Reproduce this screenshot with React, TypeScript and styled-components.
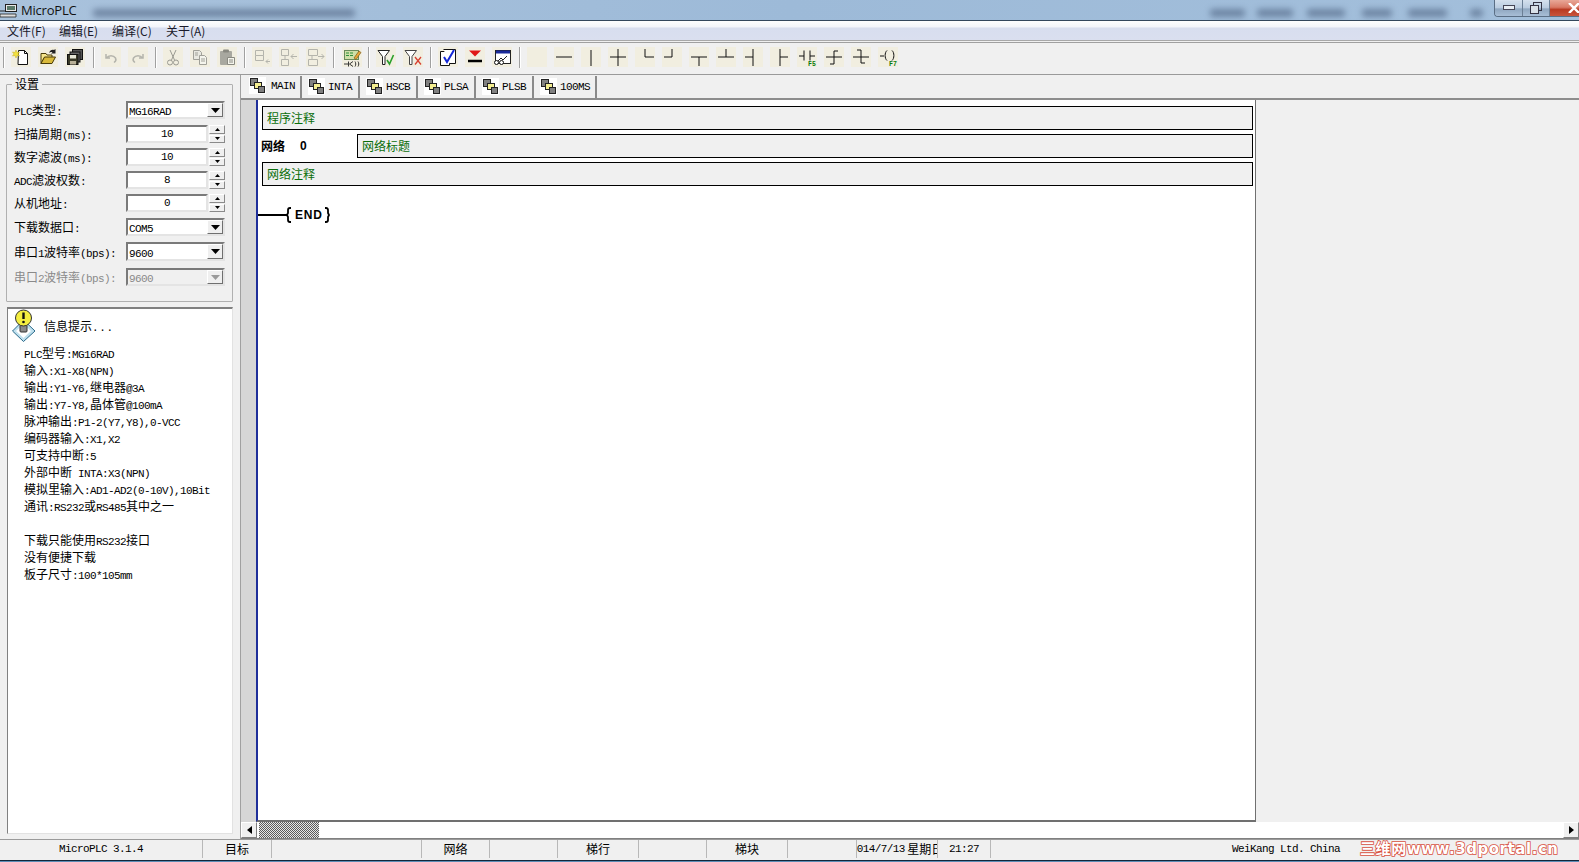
import React from "react";
import styled, { createGlobalStyle } from "styled-components";

const Global = createGlobalStyle`
  html, body { margin: 0; padding: 0; background: #f0f0f0; overflow: hidden; }
  #root { width: 1579px; height: 862px; overflow: hidden; }
  * { box-sizing: border-box; }
`;

const Window = styled.div`
  width: 1579px; height: 862px; display: flex; flex-direction: column;
  background: #f0f0f0; color: #000;
  font: 12px/16px "Noto Sans CJK SC", "Liberation Sans", sans-serif;
`;

const TitleBar = styled.div`
  height: 21px; flex: none; display: flex; align-items: flex-start;
  background: linear-gradient(90deg, #a9c2dc 0, #9dbad8 50%, #a3bfdb 100%);
  border-bottom: 1px solid #33475c; overflow: hidden;
`;
const AppIcon = styled.svg`width: 18px; height: 16px; margin: 3px 3px 0 0; flex: none;`;
const AppTitle = styled.span`
  font: 13px/20px "Open Sans", "Liberation Sans", sans-serif; color: #111; width: 72px; flex: none; letter-spacing: -0.2px;
`;
const BlurText = styled.span<{ $w: number; $gap?: number }>`
  display: block; flex: none; height: 8px; margin: 9px 0 0 ${(p) => p.$gap ?? 0}px; width: ${(p) => p.$w}px;
  background: #4a5f7e; opacity: 0.6; filter: blur(3px); border-radius: 3px;
`;
const Spacer = styled.div`flex: 1;`;
const ButtonGap = styled.div`flex: none; width: 11px;`;
const WinButtons = styled.div`
  display: flex; height: 17px; flex: none; border: 1px solid #5a6e84; border-top: none; border-right: none; border-radius: 0 0 0 4px; overflow: hidden;
`;
const WinButton = styled.div<{ $w: number; $close?: boolean }>`
  width: ${(p) => p.$w}px; display: flex; align-items: center;
  justify-content: ${(p) => (p.$close ? "flex-start" : "center")};
  padding-left: ${(p) => (p.$close ? 18 : 0)}px;
  border-right: ${(p) => (p.$close ? "none" : "1px solid #6b7f95")};
  background: ${(p) => p.$close
    ? "linear-gradient(180deg, #e8a898 0, #d97a66 45%, #b93a22 60%, #c8543c 100%)"
    : "linear-gradient(180deg, #d4e0ed 0, #b9cbdf 50%, #8ea6bf 55%, #a8bed6 100%)"};
  svg { flex: none; }
`;

const MenuBar = styled.div`
  height: 20px; flex: none; display: flex; align-items: center;
  padding-left: 7px; border-bottom: 1px solid #a8a8a8;
  background: linear-gradient(180deg, #fdfefe 0, #f3f5fa 30%, #d8deef 38%, #dadfef 100%);
`;
const MenuItem = styled.span<{ $w: number }>`
  width: ${(p) => p.$w}px; font: 12px/16px "Noto Sans CJK SC", sans-serif; color: #1a1a2a;
`;

const Toolbar = styled.div`
  height: 33px; flex: none; margin-top: 1px; display: flex; align-items: flex-start;
  padding: 4px 0 0 3px; border-top: 1px solid #a0a0a0; border-bottom: 1px solid #9a9a9a; background: #f0f0f0;
`;
const Sep = styled.div<{ $l?: number; $r?: number }>`
  width: 2px; height: 21px; flex: none; margin: 0 ${(p) => p.$r ?? 6}px 0 ${(p) => p.$l ?? 7}px;
  background: linear-gradient(90deg, #a0a0a0 50%, #fff 50%);
`;
const ToolGroup = styled.div`display: flex; gap: 7px;`;
const ToolBtn = styled.div`
  width: 20px; height: 20px; flex: none; background: #f1eee0; display: flex;
  svg { width: 20px; height: 20px; display: block; overflow: visible; }
`;

const Body = styled.div`flex: 1; display: flex; min-height: 0;`;
const SidePanel = styled.div`
  width: 240px; flex: none; display: flex; flex-direction: column; padding: 2px 7px 5px 7px;
`;
const GroupBox = styled.fieldset`
  margin: 0 0 5px -1px; padding: 10px 0 0 7px; height: 225px; flex: none;
  border: 1px solid #b0b0b0; border-radius: 1px; min-inline-size: 0;
`;
const Legend = styled.legend`
  padding: 0 3px; margin-left: -2px; font-size: 12px; line-height: 14px;
`;
const FormRow = styled.div<{ $h: number; $mt?: number }>`
  display: flex; align-items: center; height: ${(p) => p.$h}px; margin-top: ${(p) => p.$mt ?? 0}px;
`;
const FieldLabel = styled.span<{ $off?: boolean }>`
  width: 112px; flex: none; white-space: nowrap; color: ${(p) => (p.$off ? "#8a8a8a" : "#000")};
`;
const Latin = styled.span`font: 11px/12px "Liberation Mono", monospace; letter-spacing: -0.6px;`;

const Inset = styled.div`
  border: 2px solid; border-color: #7a7a7a #e4e4e4 #e4e4e4 #7a7a7a; background: #fff;
`;
const SpinField = styled(Inset)`
  width: 82px; height: 18px; display: flex; align-items: center; justify-content: center;
`;
const SpinBtns = styled.div`width: 16px; height: 18px; margin-left: 1px; display: flex; flex-direction: column; gap: 1px;`;
const SpinBtn = styled.div`
  flex: 1; background: #efefef; border: 1px solid; border-color: #fff #8a8a8a #8a8a8a #fff;
  display: flex; align-items: center; justify-content: center;
`;
const ComboField = styled(Inset)<{ $off?: boolean }>`
  width: 99px; display: flex; align-items: center; height: 100%; padding-left: 1px;
  color: ${(p) => (p.$off ? "#8a8a8a" : "#000")};
  background: ${(p) => (p.$off ? "#f0f0f0" : "#fff")};
`;
const ComboText = styled.span`flex: 1;`;
const ComboBtn = styled.div`
  width: 16px; align-self: stretch; background: #efefef; border: 1px solid; border-color: #fff #6f6f6f #6f6f6f #fff;
  display: flex; align-items: center; justify-content: center;
`;

const InfoPanel = styled.div`
  flex: 1; background: #fff; border: 1px solid; border-color: #808080 #e2e2e2 #e2e2e2 #808080; border-top-width: 2px;
  padding: 0 0 0 4px;
`;
const InfoHead = styled.div`display: flex; align-items: center; height: 33px;`;
const InfoIcon = styled.svg`width: 25px; height: 33px; flex: none; margin-right: 7px;`;
const InfoDots = styled(Latin)`letter-spacing: 0.6px;`;
const InfoText = styled.div`padding: 2px 0 0 12px;`;
const InfoLine = styled.div`height: 17px; line-height: 17px; white-space: nowrap;`;

const Editor = styled.div`
  flex: 1; min-width: 0; display: flex; flex-direction: column; border-left: 1px solid #a0a0a0;
`;
const TabStrip = styled.div`
  height: 25px; flex: none; display: flex; padding-top: 1px; border-bottom: 2px solid #8d8d8d;
`;
const Tab = styled.div<{ $w: number; $active?: boolean }>`
  width: ${(p) => p.$w}px; height: 22px; flex: none; display: flex; align-items: center;
  padding: ${(p) => (p.$active ? "0 0 3px 8px" : "0 0 1px 5px")};
  border-right: 2px solid #8a8a8a; margin-right: 1px;
  svg { flex: none; width: 17px; height: 17px; margin-right: ${(p) => (p.$active ? 5 : 3)}px; }
`;
const EditorMain = styled.div`flex: 1; display: flex; min-height: 0;`;
const Gutter = styled.div`width: 15px; flex: none; background: #d6d6d6;`;
const Canvas = styled.div`
  width: 1000px; flex: none; background: #fff; border-left: 2px solid #1f2f9a;
  border-right: 1px solid #707070; border-bottom: 2px solid #707070; padding: 6px 2px 0 4px;
`;
const Comment = styled.div`
  height: 24px; border: 1px solid #000; background: #f0f0f0; color: #0a6e0a; padding-left: 4px; line-height: 22px;
`;
const NetRow = styled.div`display: flex; align-items: center; height: 24px; margin: 4px 0;`;
const NetLabel = styled.span`font-weight: 700; width: 39px; flex: none; margin-left: -1px;`;
const NetNum = styled.span`font: 700 12px "Liberation Sans", sans-serif; width: 57px; flex: none;`;
const NetTitle = styled(Comment)`flex: 1;`;
const Rung = styled.div`display: flex; align-items: center; margin: 17px 0 0 -4px; height: 24px;`;
const EndText = styled.span`font: 700 12px "Liberation Sans", sans-serif; letter-spacing: 0.8px; margin: 0 2px 0 3px;`;
const EmptyArea = styled.div`flex: 1;`;

const HScroll = styled.div`height: 17px; flex: none; display: flex; background: #fff; border-bottom: 1px solid #808080;`;
const ScrollBtn = styled.div`
  width: 16px; flex: none; background: #f0f0f0; border: 1px solid; border-color: #fff #808080 #808080 #fff;
  display: flex; align-items: center; justify-content: center;
`;
const Thumb = styled.div`
  width: 60px; margin-left: 2px; background: repeating-conic-gradient(#5c5c5c 0 25%, #e8e8e8 0 50%) 0 0 / 2px 2px;
`;
const Track = styled.div`flex: 1;`;

const StatusBar = styled.div`
  height: 21px; flex: none; display: flex; background: #f0f0f0; border-top: 1px solid #9a9a9a; padding-bottom: 2px;
`;
const Pane = styled.div<{ $w: number }>`
  width: ${(p) => p.$w}px; flex: none; overflow: hidden; display: flex; align-items: center; justify-content: center; white-space: nowrap;
  border-right: 1px solid #b8b8b8;
`;
const LastPane = styled.div`flex: 1; display: flex; align-items: center; padding-left: 241px;`;
const Watermark = styled.span`
  margin-left: 20px; font: 700 15px/18px "DejaVu Sans", "Noto Sans CJK SC", sans-serif; color: #fff;
  -webkit-text-stroke: 1.6px #d8503f; paint-order: stroke fill; white-space: nowrap; letter-spacing: 0.55px;
`;
const BottomEdge = styled.div`height: 2px; flex: none; background: linear-gradient(180deg, #12263a 50%, #5d8cb5 50%);`;

const Mixed = ({ t }: { t: string }) => (
  <>
    {t.split(/([\x00-\x7f]+)/).map((s, i) =>
      s === "" ? null : /[\x00-\x7f]/.test(s) ? <Latin key={i}>{s}</Latin> : <React.Fragment key={i}>{s}</React.Fragment>
    )}
  </>
);

const G = "#b4b4ac";
const icons: Record<string, React.ReactNode> = {
  new: <>
    <path d="M7.5 3.5h6l3 3v11h-9.500z" fill="#fff" stroke="#111" />
    <path d="M13.500 3.500v3h3" fill="none" stroke="#111" />
    <path d="M5 3l1 2.500 2.500-.5-1.500 2 1.500 2-2.500-.5-1 2.500-1-2.500-2.500.5 1.500-2-1.500-2 2.500.5z" fill="#f4e23c" stroke="#c8b020" strokeWidth=".5" />
  </>,
  open: <>
    <path d="M3 6.500h5l1 1.500h5v2.500H6.500L3 16.500z" fill="#f6e68c" stroke="#4a3c08" />
    <path d="M3 16.500l3.500-6.500h11l-3.500 6.500z" fill="#d9b93a" stroke="#4a3c08" />
    <path d="M11 6c1-3 3-3.500 5-3l1.500-1v4.500h-4.500l1.500-1.200c-1.300-.6-2.500-.3-3.500.7z" fill="#222" />
  </>,
  saveall: <>
    <rect x="7.500" y="2.500" width="10" height="10" fill="#555" stroke="#111" />
    <rect x="5" y="5" width="10" height="10" fill="#666" stroke="#111" />
    <rect x="2.500" y="7.500" width="10.500" height="10" fill="#3a3a28" stroke="#111" />
    <rect x="5" y="8" width="6" height="3.500" fill="#e8e8d8" />
    <rect x="5" y="14" width="6" height="3.500" fill="#b8b098" />
  </>,
  undo: <path d="M5 7v4h4M5.500 11c2-3 7-3 9 0 1 2 0 3.500-1.500 4.500" fill="none" stroke={G} strokeWidth="1.500" />,
  redo: <path d="M15 7v4h-4M14.500 11c-2-3-7-3-9 0-1 2 0 3.500 1.500 4.500" fill="none" stroke={G} strokeWidth="1.500" />,
  cut: <>
    <path d="M7 3l4.500 10M13 3l-4.500 10" stroke="#9a9a92" fill="none" />
    <circle cx="7" cy="15.500" r="2.500" fill="none" stroke="#9a9a92" />
    <circle cx="13" cy="15.500" r="2.500" fill="none" stroke="#9a9a92" />
  </>,
  copy: <>
    <path d="M3.500 3.500h6l2 2v7h-8z" fill="#e8e8e0" stroke="#a0a098" />
    <path d="M9.500 8.500h5l2 2v7h-7z" fill="#f4f4ec" stroke="#a0a098" />
    <path d="M11 12h4M11 14h4M5 6h3M5 8h3" stroke="#a0a098" />
  </>,
  paste: <>
    <rect x="3" y="4" width="12" height="14" rx="1" fill="#a8a8a0" />
    <rect x="6" y="2.500" width="6" height="3" rx="1" fill="#888880" />
    <path d="M10.500 10.500h7v7h-7z" fill="#f4f4ec" stroke="#8a8a82" />
    <path d="M12 13h4M12 15h4" stroke="#8a8a82" />
  </>,
  blk1: <>
    <path d="M3.500 3.500h8v5h-8zM3.500 8.500v5h8v-5" fill="none" stroke={G} />
    <path d="M18 14.500h-4l2-2M14 14.500l2 2" fill="none" stroke={G} />
  </>,
  blk2: <>
    <path d="M2.500 2.500h7v6h-7zM2.500 12.500h7v6h-7z" fill="none" stroke={G} />
    <path d="M6 8.500v4M18 9.500h-6l2.500-2.500M12 9.500l2.500 2.500" fill="none" stroke={G} />
  </>,
  blk3: <>
    <path d="M2.500 2.500h9v6h-9zM2.500 12.500h9v6h-9z" fill="none" stroke={G} />
    <path d="M6 8.500v4M12 9.500h6l-2.500-2.500M18 9.500l-2.500 2.500" fill="none" stroke={G} />
  </>,
  compile: <>
    <rect x="2.500" y="3.500" width="14" height="9" fill="#cfe0a8" stroke="#6a8a5a" />
    <path d="M4 6h3M8 6h3M4 8.500h3M8 8.500h3" stroke="#2f8f3a" strokeWidth="1.200" />
    <path d="M12 11l5-7 2 1.500-5 7z" fill="#e8a838" stroke="#6a4a10" strokeWidth=".6" />
    <path d="M2 17h4M6.500 14.500v5M11 14.500l-3.500 2.500 3.500 2.500M13 14.500c1 1.500 1 3.500 0 5M16 14.500c1 1.500 1 3.500 0 5" fill="none" stroke="#222" strokeWidth=".9" />
  </>,
  fchk: <>
    <path d="M2 3.500h11.500l-4.500 6v8h-2.500v-8z" fill="#fff" stroke="#222" />
    <path d="M11 13l2.500 4 4-9" fill="none" stroke="#2aa02a" strokeWidth="1.600" />
  </>,
  fx: <>
    <path d="M2 3.500h11.500l-4.500 6v8h-2.500v-8z" fill="#fff" stroke="#444" />
    <path d="M12 10l6 7.500M18 10l-6 7.500" stroke="#d84030" strokeWidth="1.300" />
  </>,
  check: <>
    <path d="M2.500 4.500h9v14h-9z" fill="#fff" stroke="#111" />
    <path d="M5.500 2.500h12v14h-6" fill="#fff" stroke="#111" />
    <path d="M6 10l3 5 7-12" fill="none" stroke="#1428d8" strokeWidth="2" />
  </>,
  down: <>
    <path d="M4 3.500h12l-6 6z" fill="#e01818" />
    <path d="M3 14h14" stroke="#000" strokeWidth="2.500" />
  </>,
  monitor: <>
    <rect x="3.500" y="3.500" width="15" height="13" fill="#fff" stroke="#222" />
    <rect x="4" y="3.500" width="14" height="3" fill="#1a2a9a" />
    <path d="M6 14l3-3 2 2 4-4" fill="none" stroke="#222" />
    <circle cx="4.500" cy="15.500" r="2" fill="#fff" stroke="#111" />
    <circle cx="9.500" cy="15.500" r="2" fill="#fff" stroke="#111" />
  </>,
  blank: null,
  h: <path d="M2 10h16" stroke="#111" />,
  v: <path d="M10 3v16" stroke="#111" />,
  cross: <path d="M2 10h16M10 2v17" stroke="#111" />,
  ll: <path d="M10 2v8h9" fill="none" stroke="#111" />,
  lr: <path d="M10 2v8H2" fill="none" stroke="#111" />,
  td: <path d="M2 10h16M10 10v9" fill="none" stroke="#111" />,
  tu: <path d="M2 10h16M10 2v8" fill="none" stroke="#111" />,
  tl: <path d="M2 10h8M10 2v17" fill="none" stroke="#111" />,
  tr: <path d="M18 10h-8M10 2v17" fill="none" stroke="#111" />,
  contact: <>
    <path d="M2 9h5M7 3.500v10M13 3.500v10M13 9h5" fill="none" stroke="#111" />
    <text x="11" y="19" fontSize="6.500" fontWeight="700" fill="#0a7a0a" fontFamily="Liberation Mono">F5</text>
  </>,
  coilA: <path d="M2 10h16M10 17V4h4M10 17H6" fill="none" stroke="#111" />,
  coilB: <path d="M2 10h16M10 3v13h4M10 3H6" fill="none" stroke="#111" />,
  coil: <>
    <path d="M2 9h4M9 3.500c-2.500 2-2.500 8 0 10M14 3.500c2.500 2 2.500 8 0 10" fill="none" stroke="#111" />
    <text x="11" y="19" fontSize="6.500" fontWeight="700" fill="#0a7a0a" fontFamily="Liberation Mono">F7</text>
  </>,
};
const Icon = ({ n }: { n: string }) => (
  <ToolBtn><svg viewBox="0 0 20 20">{icons[n]}</svg></ToolBtn>
);

const TabIcon = () => (
  <svg viewBox="0 0 17 17">
    <rect width="17" height="17" fill="#fff" />
    <rect x="1.500" y="1.500" width="7" height="7" fill="#808080" stroke="#222" />
    <rect x="5.500" y="5.500" width="7" height="6" fill="#f4ee90" stroke="#222" />
    <rect x="9.500" y="9.500" width="6" height="6" fill="#808080" stroke="#222" />
  </svg>
);

const Spin = ({ v }: { v: string }) => (
  <>
    <SpinField><Latin>{v}</Latin></SpinField>
    <SpinBtns>
      <SpinBtn><svg width="5" height="3"><path d="M2.500 0L5 3H0z" /></svg></SpinBtn>
      <SpinBtn><svg width="5" height="3"><path d="M0 0h5L2.500 3z" /></svg></SpinBtn>
    </SpinBtns>
  </>
);

const Combo = ({ v, off }: { v: string; off?: boolean }) => (
  <ComboField $off={off}>
    <ComboText><Latin>{v}</Latin></ComboText>
    <ComboBtn><svg width="9" height="5"><path d="M0 0h9L4.500 5z" fill={off ? "#9a9a9a" : "#000"} /></svg></ComboBtn>
  </ComboField>
);

const info = [
  "PLC型号:MG16RAD", "输入:X1-X8(NPN)", "输出:Y1-Y6,继电器@3A", "输出:Y7-Y8,晶体管@100mA",
  "脉冲输出:P1-2(Y7,Y8),0-VCC", "编码器输入:X1,X2", "可支持中断:5", "外部中断 INTA:X3(NPN)",
  "模拟里输入:AD1-AD2(0-10V),10Bit", "通讯:RS232或RS485其中之一", "", "下载只能使用RS232接口", "没有便捷下载", "板子尺寸:100*105mm",
];

const tabs: [string, number][] = [["MAIN", 61], ["INTA", 57], ["HSCB", 57], ["PLSA", 57], ["PLSB", 57], ["100MS", 62]];

export default function App() {
  return (
    <Window>
      <Global />
      <TitleBar>
        <AppIcon viewBox="0 0 18 16">
          <rect x="5.500" y="1.500" width="11" height="7" fill="#e8e8e8" stroke="#222" />
          <rect x="7" y="3" width="8" height="4" fill="#5a7a6a" />
          <path d="M0 11h16v3H0z" fill="#ddd" stroke="#222" strokeWidth=".8" />
          <path d="M0 8h5" stroke="#222" />
        </AppIcon>
        <AppTitle>MicroPLC</AppTitle>
        <BlurText $w={262} />
        <Spacer />
        <BlurText $w={35} />
        <BlurText $w={36} $gap={12} />
        <BlurText $w={38} $gap={14} />
        <BlurText $w={30} $gap={17} />
        <BlurText $w={39} $gap={16} />
        <BlurText $w={13} $gap={23} />
        <ButtonGap />
        <WinButtons>
          <WinButton $w={28}><svg width="12" height="6"><rect x=".5" y=".5" width="11" height="4" fill="#e8eef4" stroke="#445" /></svg></WinButton>
          <WinButton $w={27}><svg width="12" height="12"><rect x="3.500" y=".5" width="8" height="8" fill="none" stroke="#334" /><rect x=".5" y="3.500" width="8" height="8" fill="#d8e0e8" stroke="#334" /></svg></WinButton>
          <WinButton $w={29} $close><svg width="12" height="10"><path d="M1 0l10 10M11 0L1 10" stroke="#fff" strokeWidth="2.400" /></svg></WinButton>
        </WinButtons>
      </TitleBar>

      <MenuBar>
        <MenuItem $w={52}>文件(F)</MenuItem>
        <MenuItem $w={53}>编辑(E)</MenuItem>
        <MenuItem $w={54}>编译(C)</MenuItem>
        <MenuItem $w={60}>关于(A)</MenuItem>
      </MenuBar>

      <Toolbar>
        <Sep $l={0} />
        <ToolGroup><Icon n="new" /><Icon n="open" /><Icon n="saveall" /></ToolGroup>
        <Sep $l={8} /><ToolGroup><Icon n="undo" /><Icon n="redo" /></ToolGroup>
        <Sep /><ToolGroup><Icon n="cut" /><Icon n="copy" /><Icon n="paste" /></ToolGroup>
        <Sep /><ToolGroup><Icon n="blk1" /><Icon n="blk2" /><Icon n="blk3" /></ToolGroup>
        <Sep $l={7} $r={7} /><ToolGroup><Icon n="compile" /></ToolGroup>
        <Sep $l={6} /><ToolGroup><Icon n="fchk" /><Icon n="fx" /></ToolGroup>
        <Sep /><ToolGroup><Icon n="check" /><Icon n="down" /><Icon n="monitor" /></ToolGroup>
        <Sep />
        <ToolGroup>
          {["blank", "h", "v", "cross", "ll", "lr", "td", "tu", "tl", "tr", "contact", "coilA", "coilB", "coil"].map((n) => <Icon key={n} n={n} />)}
        </ToolGroup>
      </Toolbar>

      <Body>
        <SidePanel>
          <GroupBox>
            <Legend>设置</Legend>
            <FormRow $h={18}><FieldLabel><Mixed t="PLC类型:" /></FieldLabel><Combo v="MG16RAD" /></FormRow>
            <FormRow $h={18} $mt={6}><FieldLabel><Mixed t="扫描周期(ms):" /></FieldLabel><Spin v="10" /></FormRow>
            <FormRow $h={18} $mt={5}><FieldLabel><Mixed t="数字滤波(ms):" /></FieldLabel><Spin v="10" /></FormRow>
            <FormRow $h={18} $mt={5}><FieldLabel><Mixed t="ADC滤波权数:" /></FieldLabel><Spin v="8" /></FormRow>
            <FormRow $h={18} $mt={5}><FieldLabel><Mixed t="从机地址:" /></FieldLabel><Spin v="0" /></FormRow>
            <FormRow $h={18} $mt={6}><FieldLabel><Mixed t="下载数据口:" /></FieldLabel><Combo v="COM5" /></FormRow>
            <FormRow $h={19} $mt={6}><FieldLabel><Mixed t="串口1波特率(bps):" /></FieldLabel><Combo v="9600" /></FormRow>
            <FormRow $h={18} $mt={7}><FieldLabel $off><Mixed t="串口2波特率(bps):" /></FieldLabel><Combo v="9600" off /></FormRow>
          </GroupBox>
          <InfoPanel>
            <InfoHead>
              <InfoIcon viewBox="0 0 25 33">
                <path d="M11.500 11L23 22 11.500 32.500 0.500 22z" fill="#bfe0ee" stroke="#2a6a8a" />
                <path d="M11.500 15L19 22l-7.500 7L4 22z" fill="#fff" />
                <rect x="8" y="16" width="7" height="7" rx="1" fill="#8a8a8a" stroke="#333" />
                <circle cx="11.500" cy="9" r="8" fill="#f4ee40" stroke="#333" />
                <path d="M11.500 3.500v6.500" stroke="#111" strokeWidth="2.400" />
                <circle cx="11.500" cy="13" r="1.300" fill="#111" />
              </InfoIcon>
              <span>信息提示<InfoDots>...</InfoDots></span>
            </InfoHead>
            <InfoText>
              {info.map((l, i) => <InfoLine key={i}><Mixed t={l} /></InfoLine>)}
            </InfoText>
          </InfoPanel>
        </SidePanel>

        <Editor>
          <TabStrip>
            {tabs.map(([t, w], i) => (
              <Tab key={t} $w={w} $active={i === 0}><TabIcon /><Latin>{t}</Latin></Tab>
            ))}
          </TabStrip>
          <EditorMain>
            <Gutter />
            <Canvas>
              <Comment>程序注释</Comment>
              <NetRow>
                <NetLabel>网络</NetLabel>
                <NetNum>0</NetNum>
                <NetTitle>网络标题</NetTitle>
              </NetRow>
              <Comment>网络注释</Comment>
              <Rung>
                <svg width="34" height="18" viewBox="0 0 34 18"><path d="M0 9h29M33 2h-1c-1.500 0-2 1-2 2v3l-1 2 1 2v3c0 1 .5 2 2 2h1" fill="none" stroke="#000" strokeWidth="1.800" /></svg>
                <EndText>END</EndText>
                <svg width="6" height="18" viewBox="0 0 6 18"><path d="M0 2h1c1.500 0 2 1 2 2v3l1 2-1 2v3c0 1-.5 2-2 2H0" fill="none" stroke="#000" strokeWidth="1.800" /></svg>
              </Rung>
            </Canvas>
            <EmptyArea />
          </EditorMain>
          <HScroll>
            <ScrollBtn><svg width="5" height="8"><path d="M5 0v8L0 4z" /></svg></ScrollBtn>
            <Thumb />
            <Track />
            <ScrollBtn><svg width="5" height="8"><path d="M0 0v8l5-4z" /></svg></ScrollBtn>
          </HScroll>
        </Editor>
      </Body>

      <StatusBar>
        <Pane $w={203}><Latin>MicroPLC 3.1.4</Latin></Pane>
        <Pane $w={69}>目标</Pane>
        <Pane $w={150} />
        <Pane $w={68}>网络</Pane>
        <Pane $w={68} />
        <Pane $w={81}>梯行</Pane>
        <Pane $w={68} />
        <Pane $w={81}>梯块</Pane>
        <Pane $w={69} />
        <Pane $w={81}><Latin>2014/7/13</Latin>&nbsp;星期日</Pane>
        <Pane $w={53}><Latin>21:27</Latin></Pane>
        <LastPane>
          <Latin>WeiKang Ltd. China</Latin>
          <Watermark>三维网www.3dportal.cn</Watermark>
        </LastPane>
      </StatusBar>
      <BottomEdge />
    </Window>
  );
}
